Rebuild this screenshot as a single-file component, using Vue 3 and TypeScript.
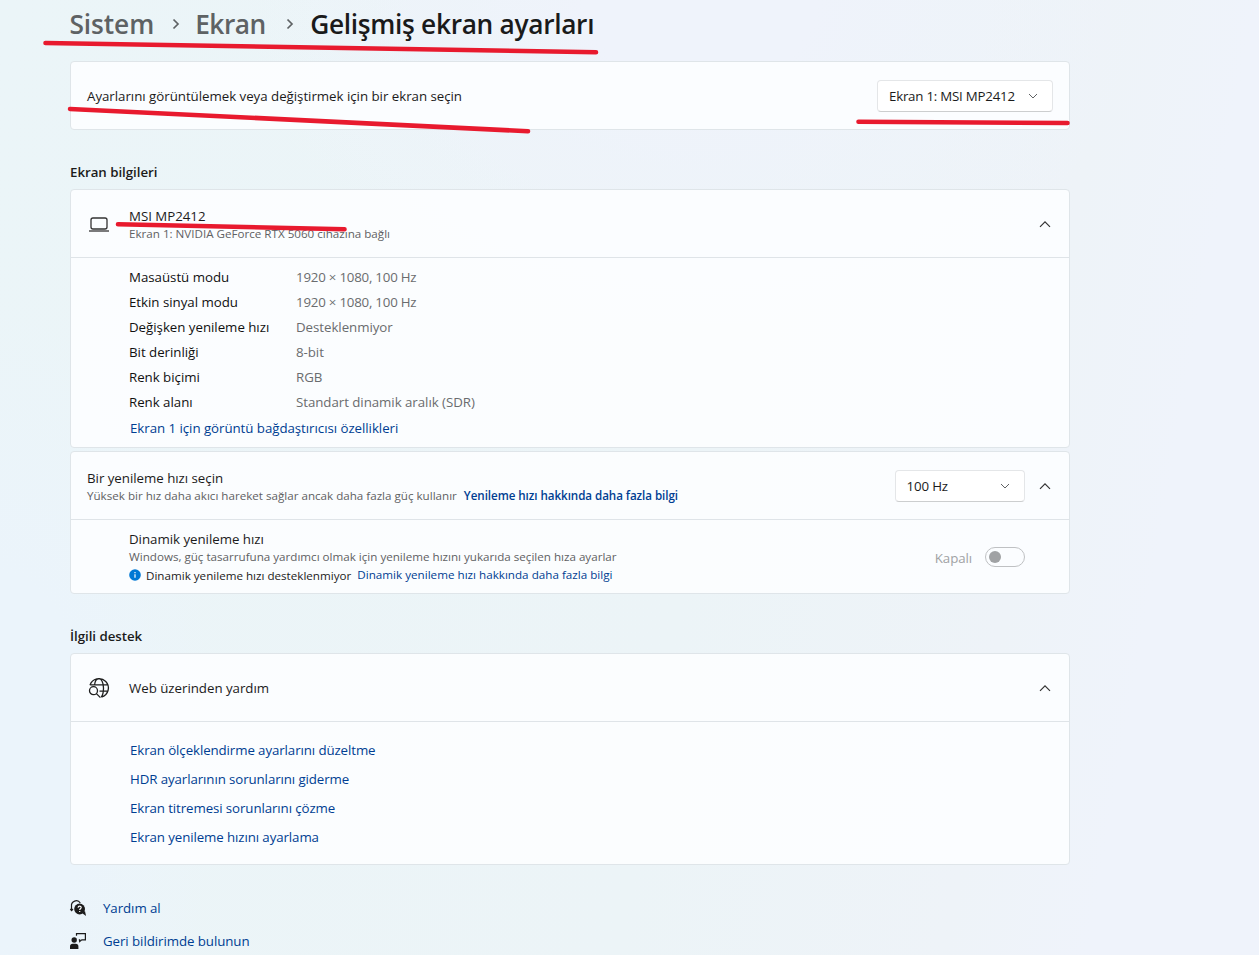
<script setup lang="ts">
interface Detail { label: string; value: string; numeric?: boolean }

const details: Detail[] = [
  { label: 'Masaüstü modu', value: '1920 × 1080, 100 Hz', numeric: true },
  { label: 'Etkin sinyal modu', value: '1920 × 1080, 100 Hz', numeric: true },
  { label: 'Değişken yenileme hızı', value: 'Desteklenmiyor' },
  { label: 'Bit derinliği', value: '8-bit' },
  { label: 'Renk biçimi', value: 'RGB' },
  { label: 'Renk alanı', value: 'Standart dinamik aralık (SDR)' },
]

const helpLinks: string[] = [
  'Ekran ölçeklendirme ayarlarını düzeltme',
  'HDR ayarlarının sorunlarını giderme',
  'Ekran titremesi sorunlarını çözme',
  'Ekran yenileme hızını ayarlama',
]
</script>

<template>
  <main class="page">
    <nav class="crumbs">
      <a class="c1">Sistem</a>
      <svg class="sep" viewBox="0 0 8 12"><path d="M1.5 1.5 6 6 1.5 10.5" /></svg>
      <a class="c2">Ekran</a>
      <svg class="sep sep2" viewBox="0 0 8 12"><path d="M1.5 1.5 6 6 1.5 10.5" /></svg>
      <h1>Gelişmiş ekran ayarları</h1>
    </nav>

    <section class="card picker">
      <span class="pick-label">Ayarlarını görüntülemek veya değiştirmek için bir ekran seçin</span>
      <button class="combo wide"><span>Ekran 1: MSI MP2412</span><svg class="down" viewBox="0 0 10 6"><path d="M1 1 5 5 9 1" /></svg></button>
    </section>

    <h2>Ekran bilgileri</h2>
    <section class="card info">
      <header class="head">
        <svg class="icon" viewBox="0 0 22 22"><rect x="3" y="5" width="16" height="11" rx="2" /><path d="M1 18h20" /></svg>
        <div class="titles">
          <span>MSI MP2412</span>
          <span class="caption">Ekran 1: NVIDIA GeForce RTX 5060 cihazına bağlı</span>
        </div>
        <svg class="up" viewBox="0 0 12 8"><path d="M1 6.8 6 1.8 11 6.8" /></svg>
      </header>
      <div class="details">
        <div v-for="d in details" :key="d.label" class="detail">
          <span>{{ d.label }}</span><span class="value" :class="{ numeric: d.numeric }">{{ d.value }}</span>
        </div>
        <a class="link adapter">Ekran 1 için görüntü bağdaştırıcısı özellikleri</a>
      </div>
    </section>

    <section class="card refresh">
      <header class="head">
        <div class="titles">
          <span>Bir yenileme hızı seçin</span>
          <span class="caption">Yüksek bir hız daha akıcı hareket sağlar ancak daha fazla güç kullanır<a class="link strong">Yenileme hızı hakkında daha fazla bilgi</a></span>
        </div>
        <button class="combo"><span>100 Hz</span><svg class="down" viewBox="0 0 10 6"><path d="M1 1 5 5 9 1" /></svg></button>
        <svg class="up" viewBox="0 0 12 8"><path d="M1 6.8 6 1.8 11 6.8" /></svg>
      </header>
      <div class="dynamic">
        <div class="titles">
          <span>Dinamik yenileme hızı</span>
          <span class="caption">Windows, güç tasarrufuna yardımcı olmak için yenileme hızını yukarıda seçilen hıza ayarlar</span>
          <span class="note">
            <svg class="badge" viewBox="0 0 12 12"><circle cx="6" cy="6" r="5.8" /><path d="M6 5.2v3.6M6 3v1.2" /></svg>
            <span>Dinamik yenileme hızı desteklenmiyor</span>
            <a class="link small">Dinamik yenileme hızı hakkında daha fazla bilgi</a>
          </span>
        </div>
        <span class="off">Kapalı</span>
        <span class="toggle"><i></i></span>
      </div>
    </section>

    <h2>İlgili destek</h2>
    <section class="card web">
      <header class="head">
        <svg class="icon globe" viewBox="0 0 22 22">
          <path d="M2 8.3A9.4 9.4 0 1 1 13.4 20.1M2 7.8h18M11.5 14.2h8M6.5 8.3C6.900 4.300 8.700 1.600 11 1.600s4.500 3.900 4.500 9.400c0 4.200-1 7.600-2.300 9" />
          <circle cx="5.5" cy="13.7" r="4" /><path d="m8.4 16.6 4 4" />
        </svg>
        <div class="titles"><span>Web üzerinden yardım</span></div>
        <svg class="up" viewBox="0 0 12 8"><path d="M1 6.8 6 1.8 11 6.8" /></svg>
      </header>
      <ul><li v-for="h in helpLinks" :key="h"><a class="link">{{ h }}</a></li></ul>
    </section>

    <footer>
      <div class="foot">
        <svg viewBox="0 0 16 16"><path class="thin" d="M1.5 10.5V6.2a4.800 4.800 0 0 1 8.800-3.200M.3 9l1.300 1.600L3 9" /><circle cx="9.6" cy="9" r="5.4" /><path d="m12 13 4 3-1-5z" /><path class="mark" d="M8.1 7.7c0-2 3.100-2 3.100-.1 0 1.200-1.500 1.200-1.500 2.400M9.700 11v1" /></svg>
        <a class="link">Yardım al</a>
      </div>
      <div class="foot">
        <svg viewBox="0 0 16 16"><circle cx="4.2" cy="7" r="2.7" /><path d="M0 16v-2.600c0-1.500 1-2.600 2.600-2.600h3.200c1.600 0 2.600 1.100 2.600 2.600V16z" /><path class="thin" d="M6.500 2.800V.7h8.900v6.200h-3.600L9.700 8.600V6.900H8.800" /></svg>
        <a class="link">Geri bildirimde bulunun</a>
      </div>
    </footer>

    <svg class="ink" viewBox="0 0 1259 955">
      <path d="M45.500 43 596 52.200M70 109 528 131.200M858.500 121.800 1067.500 123M118 224.300 344.500 229.200" />
    </svg>
  </main>
</template>

<style>
html, body { margin: 0; overflow: hidden; }
</style>

<style scoped>
.page {
  position: relative; box-sizing: border-box; width: 1259px; height: 955px; overflow: hidden;
  padding: 4px 189px 0 70px;
  font: 13.3px/20px "Open Sans", "Noto Sans", sans-serif; color: #1b1b1b;
  letter-spacing: -.03px;
  background:
    radial-gradient(ellipse 460px 340px at 700px 0, #eff3fb 25%, transparent),
    radial-gradient(ellipse 220px 460px at 0 760px, #ebf4fb 40%, transparent),
    linear-gradient(100deg, #ebf5f8 0%, #ecf4f7 55%, #eef3f8 78%, #eff3fb 88%);
}
.crumbs { display: flex; align-items: center; height: 40px; margin-left: -.5px; font-size: 26.3px; font-weight: 600; color: #5e6264; white-space: nowrap; }
.c1 { letter-spacing: -.1px; }
.c2 { letter-spacing: -.5px; }
h1 { margin: 0; font: inherit; letter-spacing: -.32px; color: #1a1a1a; }
svg { flex: none; overflow: visible; fill: none; stroke: #333; }
.sep { width: 8px; height: 12px; margin: 0 15px 0 18px; stroke: #5e6264; stroke-width: 1.7; }
.sep2 { margin: 0 16.5px 0 20px; }
.card { box-sizing: border-box; border: 1px solid #dfe5e9; border-radius: 4px; background: rgba(253,254,255,.88); }
.picker { display: flex; align-items: center; justify-content: space-between; height: 69px; margin-top: 17px; padding: 0 16px; }
.combo { box-sizing: border-box; display: flex; align-items: center; justify-content: space-between; width: 130px; height: 32px; padding: 0 14px 0 10.5px; border: 1px solid #e4e6e8; border-bottom-color: #cccecf; border-radius: 4px; background: #fff; font: inherit; letter-spacing: -.15px; color: #1b1b1b; }
.wide { width: 176px; padding-left: 11px; letter-spacing: -.23px; }
.down { width: 10px; height: 6px; stroke: #606264; }
.up { width: 12px; height: 8px; stroke-width: 1.2; }
h2 { margin: 32px 0 6px; font-size: 13.3px; line-height: 21px; font-weight: 600; letter-spacing: -.04px; }
.head { display: flex; align-items: center; box-sizing: border-box; height: 68px; padding: 0 18px 0 16px; border-bottom: 1px solid #dfe4e8; }
.icon { width: 22px; height: 22px; margin: 0 19px 0 1px; stroke-width: 1.3; }
.globe { stroke: #1f1f1f; }
.titles { display: flex; flex-direction: column; flex: 1; white-space: nowrap; }
.caption { font-size: 11.64px; line-height: 16px; letter-spacing: -.005px; color: #5f6163; }
.info { height: 259px; }
.details { padding: 7px 0 0 58px; color: #111; }
.detail { display: grid; grid-template-columns: 167px 1fr; height: 25px; line-height: 25px; }
.value { color: #6a6c6e; letter-spacing: -.05px; }
.numeric { letter-spacing: -.22px; }
.link { color: #003e92; }
.adapter { display: block; margin: 3px 0 0 1px; letter-spacing: -.05px; }
.refresh { height: 143px; margin-top: 3px; }
.refresh .combo { margin-right: 14px; }
.strong { margin-left: 7px; font-weight: 600; letter-spacing: -.06px; }
.dynamic { display: flex; align-items: center; height: 74px; padding: 0 44px 0 58px; }
.note { display: flex; align-items: center; height: 20px; margin: 1px 0 -1px; font-size: 11.64px; letter-spacing: 0; }
.badge { width: 12px; height: 12px; margin: 0 5px 2px 0; fill: #0078d4; stroke: none; }
.badge path { stroke: #fff; stroke-width: 1.2; }
.small { margin: -2px 0 0 6px; letter-spacing: .015px; }
.off { color: #a0a2a4; margin-right: 13px; padding-top: 2px; letter-spacing: -.1px; }
.toggle { box-sizing: border-box; display: flex; align-items: center; width: 40px; height: 20px; padding-left: 3px; border: 1px solid #bfc1c3; border-radius: 10px; }
.toggle i { width: 12px; height: 12px; border-radius: 50%; background: #a0a2a4; }
.web { height: 212px; }
ul { margin: 0; padding: 14px 0 0 59px; list-style: none; letter-spacing: -.1px; }
li { height: 29px; line-height: 29px; }
footer { padding-top: 26px; }
.foot { display: flex; align-items: center; height: 33px; letter-spacing: -.07px; }
.foot svg { width: 16px; height: 16px; margin-right: 17px; fill: #1b1b1b; stroke: none; }
.foot svg .thin { fill: none; stroke: #1b1b1b; stroke-width: 1.2; }
.foot svg .mark { fill: none; stroke: #fff; stroke-width: 1.2; }
.ink { position: absolute; left: 0; top: 0; width: 1259px; height: 955px; pointer-events: none; }
.ink path { stroke: #e81a2e; stroke-width: 4.6; stroke-linecap: round; }
</style>
